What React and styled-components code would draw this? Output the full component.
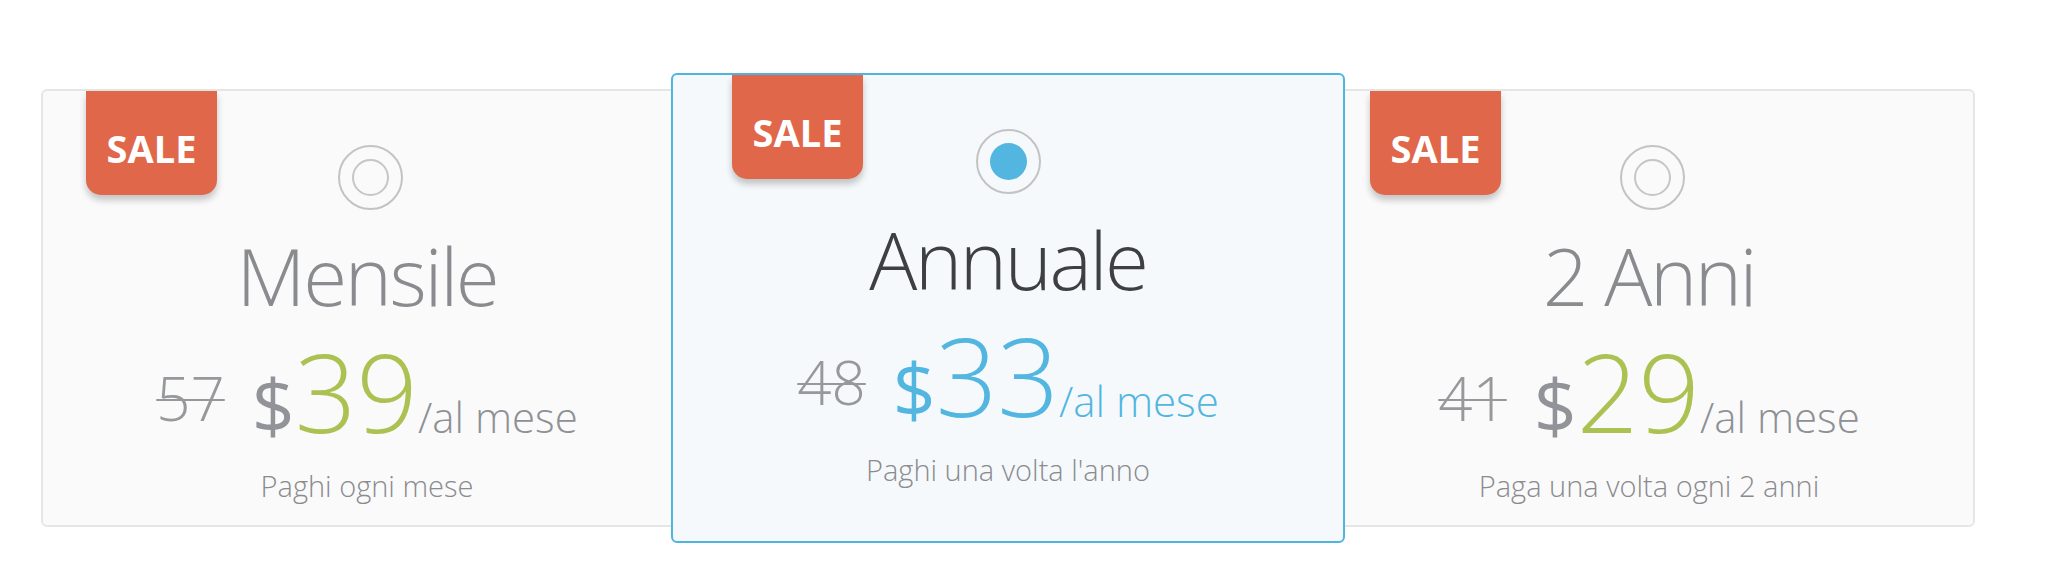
import React from 'react'
import styled, { createGlobalStyle } from 'styled-components'

const GlobalStyle = createGlobalStyle`
  * { box-sizing: border-box; }
  body {
    margin: 0;
    background: #ffffff;
    font-family: "Open Sans", "Liberation Sans", sans-serif;
  }
`

const Page = styled.div`
  padding: 89px 0 40px 41px;
`

const Row = styled.div`
  display: flex;
  align-items: flex-start;
  width: 1934px;
`

const Card = styled.div`
  position: relative;
  display: flex;
  flex-direction: column;
  align-items: center;
  padding: ${p => (p.$featured ? '54px 0 57px' : '54px 0 25px')};
  border-radius: 6px;
  border: 2px solid ${p => (p.$featured ? '#4fb5df' : '#e6e6e6')};
  background: ${p => (p.$featured ? '#f5f9fb' : '#fafafa')};
  flex: ${p => (p.$featured ? '0 0 674px' : '1 1 0')};
  margin: ${p => (p.$featured ? '-16px -22px' : '0')};
  z-index: ${p => (p.$featured ? 2 : 1)};
`

const Badge = styled.div`
  position: absolute;
  top: 0;
  left: ${p => p.$left}px;
  width: 131px;
  height: 104px;
  padding-top: 38px;
  background: #e0674a;
  border-radius: 0 0 15px 15px;
  box-shadow: 0 5px 7px rgba(0, 0, 0, 0.22);
  color: #ffffff;
  font-weight: 700;
  font-size: 38px;
  line-height: 1;
  text-align: center;
`

const Radio = styled.div`
  width: 65px;
  height: 65px;
  margin-left: ${p => (p.$checked ? 0 : 6)}px;
  border-radius: 50%;
  border: 2px solid #c3c3c3;
  display: flex;
  align-items: center;
  justify-content: center;
`

const RadioInner = styled.div`
  width: 37px;
  height: 37px;
  border-radius: 50%;
  border: ${p => (p.$checked ? 'none' : '2px solid #c6c6c6')};
  background: ${p => (p.$checked ? '#52b6e0' : 'transparent')};
`

const Title = styled.h2`
  margin: 25px 0 0;
  font-size: 80px;
  letter-spacing: -2.4px;
  line-height: 1;
  font-weight: 300;
  color: ${p => (p.$featured ? '#3d3f44' : '#8a8b8f')};
`

const Price = styled.div`
  margin-top: 23px;
  font-size: 42px;
  line-height: 1;
  font-weight: 300;
  white-space: nowrap;
  color: ${p => (p.$featured ? '#52b6e0' : '#8f9095')};
`

const OldPrice = styled.span`
  font-size: 60px;
  color: #97989c;
  text-decoration: line-through;
  text-decoration-thickness: 2px;
  vertical-align: 12px;
  margin-right: 27px;
`

const Currency = styled.span`
  font-size: 75px;
  font-weight: 400;
  color: ${p => (p.$featured ? '#52b6e0' : '#929398')};
`

const Amount = styled.span`
  font-size: 108px;
  color: ${p => (p.$featured ? '#52b6e0' : '#abc253')};
`

const Period = styled.span`
  font-size: 42px;
`

const Note = styled.p`
  margin: 25px 0 0;
  font-size: 29px;
  line-height: 1;
  font-weight: 300;
  color: #8a8b8f;
`

const plans = [
  { name: 'Mensile', old: '57', price: '39', note: 'Paghi ogni mese', badge: 43 },
  { name: 'Annuale', old: '48', price: '33', note: "Paghi una volta l'anno", badge: 59, featured: true },
  { name: '2 Anni', old: '41', price: '29', note: 'Paga una volta ogni 2 anni', badge: 45 },
]

function App() {
  return (
    <Page>
      <GlobalStyle />
      <Row>
        {plans.map(p => (
          <Card key={p.name} $featured={p.featured}>
            <Badge $left={p.badge}>SALE</Badge>
            <Radio $checked={p.featured}>
              <RadioInner $checked={p.featured} />
            </Radio>
            <Title $featured={p.featured}>{p.name}</Title>
            <Price $featured={p.featured}>
              <OldPrice>{p.old}</OldPrice>
              <Currency $featured={p.featured}>$</Currency>
              <Amount $featured={p.featured}>{p.price}</Amount>
              <Period>/al mese</Period>
            </Price>
            <Note>{p.note}</Note>
          </Card>
        ))}
      </Row>
    </Page>
  )
}

export default App
